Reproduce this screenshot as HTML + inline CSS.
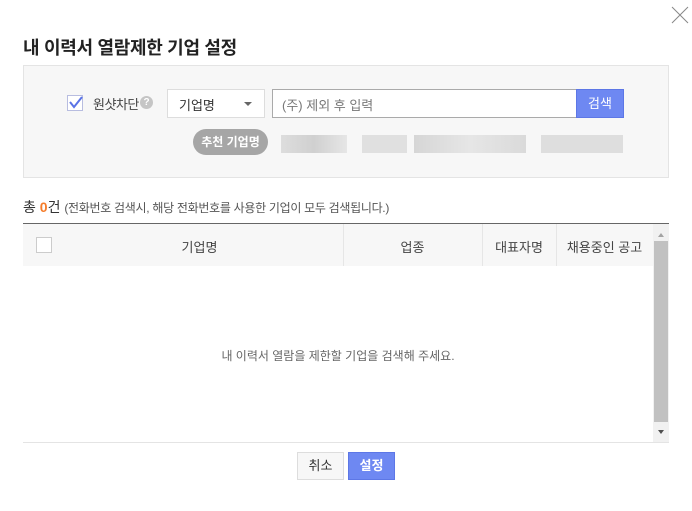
<!DOCTYPE html>
<html><head><meta charset="utf-8"><style>
*{margin:0;padding:0;box-sizing:border-box}
body{width:692px;height:511px;background:#fff;font-family:"Liberation Sans","Noto Sans CJK KR",sans-serif;position:relative;overflow:hidden;color:#333}
.a{position:absolute}
</style></head><body>
<svg class="a" style="left:671px;top:6px" width="18" height="18"><path d="M1 1L17 17M17 1L1 17" stroke="#888" stroke-width="1"/></svg>
<div class="a" style="left:23px;top:34px;font-size:18px;font-weight:bold;color:#222;letter-spacing:-0.3px">내 이력서 열람제한 기업 설정</div>
<div class="a" style="left:23px;top:65px;width:646px;height:113px;background:#f7f7f7;border:1px solid #e4e4e4"></div>
<div class="a" style="left:67px;top:95px;width:16px;height:16px;border:1px solid #b8bde0;background:#fff"></div>
<svg class="a" style="left:68px;top:95px" width="16" height="16"><path d="M2 7L6 12L14 2" stroke="#5a73e6" stroke-width="2" fill="none"/></svg>
<div class="a" style="left:93px;top:94px;font-size:13px;color:#444;letter-spacing:-0.5px">원샷차단</div>
<div class="a" style="left:140px;top:96px;width:13px;height:13px;border-radius:50%;background:#c5c5c5;color:#fff;font-size:10px;text-align:center;line-height:13px;font-weight:bold">?</div>
<div class="a" style="left:167px;top:89px;width:98px;height:29px;background:#fff;border:1px solid #ddd"></div>
<div class="a" style="left:179px;top:95px;font-size:13px;color:#333">기업명</div>
<svg class="a" style="left:184px;top:100px" width="200" height="8"><path d="M60 2h8l-4 4z" fill="#666"/></svg>
<div class="a" style="left:272px;top:89px;width:304px;height:29px;background:#fff;border:1px solid #aaa;border-right:none"></div>
<div class="a" style="left:282px;top:95px;font-size:13px;color:#777">(주) 제외 후 입력</div>
<div class="a" style="left:576px;top:89px;width:48px;height:29px;background:#6e88f2;border:1px solid #5d77e6;color:#fff;font-size:13px;text-align:center;line-height:27px">검색</div>
<div class="a" style="left:193px;top:129px;width:75px;height:26px;border-radius:13px;background:#a6a6a6;color:#fff;font-size:12px;font-weight:bold;text-align:center;line-height:26px">추천 기업명</div>
<div class="a" style="left:281px;top:135px;width:66px;height:18px;background:linear-gradient(90deg,#ddd,#d0d0d0,#e6e6e6)"></div>
<div class="a" style="left:362px;top:135px;width:45px;height:18px;background:#e0e0e0"></div>
<div class="a" style="left:414px;top:135px;width:112px;height:18px;background:linear-gradient(90deg,#d6d6d6,#e6e6e6,#dadada)"></div>
<div class="a" style="left:541px;top:135px;width:82px;height:18px;background:#dedede"></div>
<div class="a" style="left:23px;top:197px;font-size:14px;color:#333">총 <b style="color:#f57c2a">0</b>건 <span style="font-size:12px;color:#555;letter-spacing:-0.3px">(전화번호 검색시, 해당 전화번호를 사용한 기업이 모두 검색됩니다.)</span></div>
<div class="a" style="left:23px;top:223px;width:646px;height:220px;border-top:1px solid #666;border-bottom:1px solid #e4e4e4"></div>
<div class="a" style="left:23px;top:224px;width:630px;height:42px;background:#f7f7f7"></div>
<div class="a" style="left:36px;top:237px;width:16px;height:16px;border:1px solid #ccc;background:#fff"></div>
<div class="a" style="left:343px;top:224px;width:1px;height:42px;background:#e6e6e6"></div>
<div class="a" style="left:482px;top:224px;width:1px;height:42px;background:#e6e6e6"></div>
<div class="a" style="left:556px;top:224px;width:1px;height:42px;background:#e6e6e6"></div>
<div class="a" style="left:56px;top:237px;width:287px;text-align:center;font-size:13px;color:#444">기업명</div>
<div class="a" style="left:343px;top:237px;width:139px;text-align:center;font-size:13px;color:#444">업종</div>
<div class="a" style="left:482px;top:237px;width:74px;text-align:center;font-size:13px;color:#444">대표자명</div>
<div class="a" style="left:556px;top:237px;width:97px;text-align:center;font-size:13px;color:#444">채용중인 공고</div>
<div class="a" style="left:653px;top:224px;width:16px;height:218px;background:#f1f1f1"></div>
<div class="a" style="left:654px;top:241px;width:14px;height:181px;background:#c1c1c1"></div>
<svg class="a" style="left:653px;top:224px" width="16" height="218"><path d="M5 13h6l-3-4z" fill="#a3a3a3"/><path d="M5 206h6l-3 4z" fill="#505050"/></svg>
<div class="a" style="left:23px;top:347px;width:630px;text-align:center;font-size:12px;color:#666">내 이력서 열람을 제한할 기업을 검색해 주세요.</div>
<div class="a" style="left:297px;top:452px;width:47px;height:28px;background:#f7f7f7;border:1px solid #ddd;font-size:13px;text-align:center;line-height:26px;color:#333">취소</div>
<div class="a" style="left:348px;top:452px;width:47px;height:28px;background:#6e88f2;border:1px solid #5d77e6;font-size:13px;text-align:center;line-height:26px;color:#fff;font-weight:bold">설정</div>
</body></html>
